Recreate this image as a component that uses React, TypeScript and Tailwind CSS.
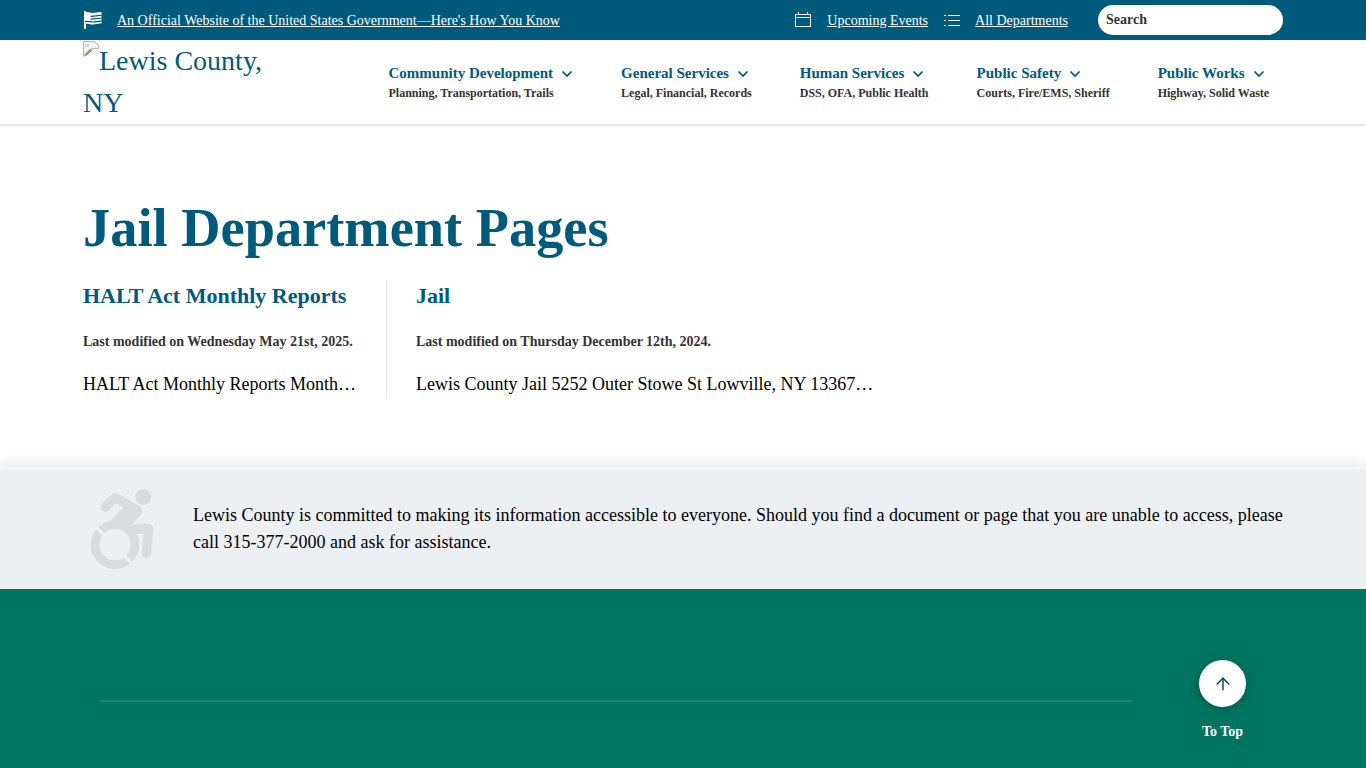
import { ArrowUp } from 'lucide-react'
import { FaAccessibleIcon } from 'react-icons/fa'

const navItems = [
  { title: 'Community Development', sub: 'Planning, Transportation, Trails' },
  { title: 'General Services', sub: 'Legal, Financial, Records' },
  { title: 'Human Services', sub: 'DSS, OFA, Public Health' },
  { title: 'Public Safety', sub: 'Courts, Fire/EMS, Sheriff' },
  { title: 'Public Works', sub: 'Highway, Solid Waste' },
]

function FlagIcon() {
  return (
    <svg width="20" height="20" viewBox="0 0 20 20" fill="none" className="shrink-0">
      <path d="M2 1v18" stroke="white" strokeWidth="2" />
      <path d="M2 2.5c3-1.4 5 .6 8 .5 3-.1 5-1.2 8.5-.8v11.4c-3.5-.6-5.5.7-8.5.8-3 .1-5-1.4-8-.4z" fill="white" />
      <path d="M7.5 6.2c3.5.6 7-1.2 11-.7M7.5 9c3.5.6 7-1.2 11-.7M2 11.6c3-.9 5.5.5 8.5.4 3-.1 5-1.2 8-.8" stroke="#005a7c" strokeWidth="1.2" />
    </svg>
  )
}

function CalendarIcon() {
  return (
    <svg width="16" height="15" viewBox="0 0 16 15" fill="none" stroke="white" strokeWidth="1" className="shrink-0 mb-px">
      <rect x="0.5" y="2.5" width="15" height="12" />
      <path d="M0.5 5.5h15M3.5 0v2.5M12.5 0v2.5" />
    </svg>
  )
}

function ListIcon() {
  return (
    <svg width="16" height="12" viewBox="0 0 16 12" fill="none" stroke="white" strokeWidth="1" className="shrink-0">
      <path d="M0 1.5h2M4 1.5h12M0 6.5h2M4 6.5h12M0 11.5h2M4 11.5h12" />
    </svg>
  )
}

function NavChevron() {
  return (
    <svg width="12" height="8" viewBox="0 0 12 8" fill="none" stroke="currentColor" strokeWidth="1.75" className="shrink-0 mt-px">
      <path d="M1.5 1.5l4.5 4.5 4.5-4.5" />
    </svg>
  )
}

function BrokenImage() {
  return (
    <svg width="16" height="16" viewBox="0 0 16 16" className="inline-block align-top mt-px">
      <path d="M0.5 0.5h11l4 4v3l-7 0-8 8z" fill="#f4f4f4" stroke="#b8b8b8" />
      <path d="M1 14l6-6 3 1-7 6z" fill="#6fae4f" />
      <path d="M2 3h4v3h-4z" fill="#c4d6ee" />
    </svg>
  )
}

export default function App() {
  return (
    <div className="min-h-screen bg-white font-['Liberation_Serif',serif] overflow-hidden">
      <div className="h-10 bg-[#005a7c] px-[83px] flex items-center text-white text-sm">
        <FlagIcon />
        <a href="#" className="ml-[14px] pt-px underline">An Official Website of the United States Government—Here's How You Know</a>
        <div className="ml-auto flex items-center">
          <CalendarIcon />
          <a href="#" className="ml-4 pt-px underline">Upcoming Events</a>
          <span className="ml-4"><ListIcon /></span>
          <a href="#" className="ml-[15px] pt-px underline">All Departments</a>
          <div className="ml-[30px] w-[185px] h-[30px] bg-white rounded-full px-2 flex items-center text-sm font-bold text-[#333333]">Search</div>
        </div>
      </div>

      <header className="h-[86px] border-b-2 border-[#e8e8e8] px-[83px] flex">
        <a href="#" className="block w-[305.5px] shrink-0 text-[#005a7c] text-[28px] leading-[42px]">
          <div className="w-[190px]"><BrokenImage />Lewis County, NY</div>
        </a>
        <nav className="flex gap-12 pt-6">
          {navItems.map((item) => (
            <div key={item.title} className="whitespace-nowrap">
              <div className="flex items-center gap-2 text-[15px] leading-[18px] font-bold text-[#005a7c]">
                {item.title}
                <NavChevron />
              </div>
              <div className="mt-[3px] text-xs leading-4 font-bold text-[#333333]">{item.sub}</div>
            </div>
          ))}
        </nav>
      </header>

      <main className="px-[83px] pt-[72px] h-[341px]">
        <h1 className="text-[54.4px] leading-[60px] font-bold text-[#005a7c] whitespace-nowrap">Jail Department Pages</h1>
        <div className="mt-[22px] flex">
          <section className="w-[304px] pr-[28px] border-r border-[#e4e4e4] h-[119px]">
            <h2 className="mt-px text-[22px] leading-[30px] font-bold text-[#005a7c]">HALT Act Monthly Reports</h2>
            <p className="mt-[23px] text-sm leading-4 font-bold text-[#333333]">Last modified on Wednesday May 21st, 2025.</p>
            <p className="mt-[22px] text-lg leading-6 text-black truncate">HALT Act Monthly Reports Monthly Reports</p>
          </section>
          <section className="w-[487px] pl-[29px]">
            <h2 className="mt-px text-[22px] leading-[30px] font-bold text-[#005a7c]">Jail</h2>
            <p className="mt-[23px] text-sm leading-4 font-bold text-[#333333]">Last modified on Thursday December 12th, 2024.</p>
            <p className="mt-[22px] text-lg leading-6 text-black truncate">Lewis County Jail 5252 Outer Stowe St Lowville, NY 13367 Phone Number</p>
          </section>
        </div>
      </main>

      <div className="h-[122px] bg-[#edf0f3] border-t-2 border-[#f4f6f8] shadow-[0_-5px_10px_rgba(0,0,0,0.08)] px-[83px] flex items-center">
        <FaAccessibleIcon className="w-[80px] h-[80px] shrink-0 text-[#d9dcdf] ml-[-1px]" />
        <p className="ml-[31px] text-lg leading-[27px] text-black">
          Lewis County is committed to making its information accessible to everyone. Should you find a document or page that you are unable to access, please call 315-377-2000 and ask for assistance.
        </p>
      </div>

      <footer className="h-[179px] bg-[#007561] pl-[100px] pr-[120px] flex">
        <div className="w-[1032px] h-[2px] mt-[111px] bg-[#1f8471]" />
        <div className="ml-[67px] mt-[71px] flex flex-col items-center w-[47px]">
          <div className="w-[47px] h-[47px] shrink-0 rounded-full bg-white flex items-center justify-center shadow-[0_2px_10px_rgba(0,0,0,0.25)]">
            <ArrowUp size={20} strokeWidth={1.75} className="text-[#00456b]" />
          </div>
          <span className="mt-[17px] text-sm leading-4 font-bold text-white whitespace-nowrap">To Top</span>
        </div>
      </footer>
    </div>
  )
}
